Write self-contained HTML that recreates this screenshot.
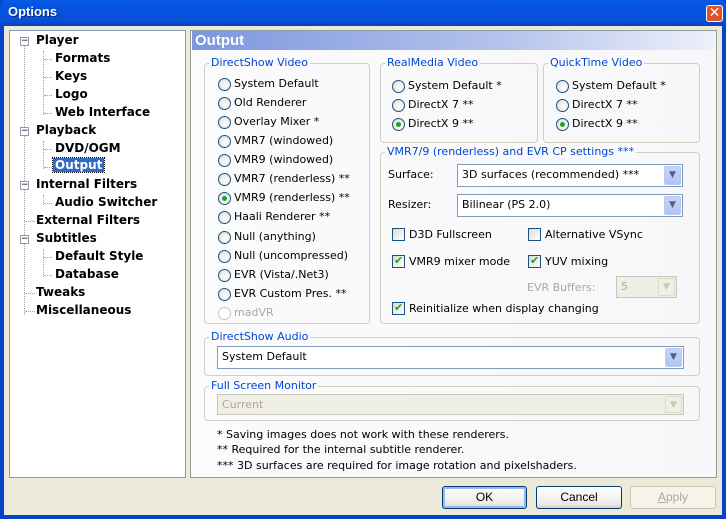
<!DOCTYPE html><html><head><style>
*{margin:0;padding:0;box-sizing:border-box}
body{width:726px;height:519px;overflow:hidden;background:#0842c8;font-family:"DejaVu Sans","Liberation Sans",sans-serif;font-size:11px;position:relative}
.a{position:absolute;white-space:nowrap}
#title{left:0;top:0;width:726px;height:26px;background:linear-gradient(#0a5ae8,#0453e0 20%,#0a4fd8 80%,#0a3fb8);border-radius:7px 7px 0 0}
#tt{left:8px;top:4px;color:#fff;font-weight:bold;font-size:13px;font-family:"Liberation Sans",sans-serif;text-shadow:1px 1px #0a2a80}
#cls{left:706px;top:5px;width:17px;height:17px;background:#e0522a;border:1px solid #fff;border-radius:3px;color:#fff;font-weight:bold;font-size:14px;text-align:center;line-height:15px}
#body{left:4px;top:26px;width:718px;height:489px;background:#ece9d8}
#tree{left:9px;top:30px;width:177px;height:448px;background:#fff;border:1px solid #7f9db9}
.t{position:absolute;font-weight:bold;font-size:12px;color:#000}
.ex{position:absolute;width:9px;height:9px;border:1px solid #8a99b5;background:#fff;font-size:9px;line-height:6px;text-align:center;color:#000}
.dv{position:absolute;border-left:1px dotted #a0a0a0}
.dh{position:absolute;border-top:1px dotted #a0a0a0;width:8px}
#panel{left:190px;top:30px;width:527px;height:448px;border:1px solid #919b9c;background:linear-gradient(90deg,#fbfbfc,#f7f7fa)}
#hdr{left:192px;top:31px;width:523px;height:19px;background:linear-gradient(90deg,#7d97de,#b5c4ec 60%,#eef0fa);color:#fff;font-weight:bold;font-size:15px;padding-left:3px;line-height:19px;font-family:"Liberation Sans",sans-serif}
.g{position:absolute;border:1px solid #d0d0bf;border-radius:4px}
.gl{position:absolute;color:#0046d5;background:#fafafb;padding:0 2px;white-space:nowrap}
.r{position:absolute;white-space:nowrap;padding-left:16px;line-height:14px}
.r:before{content:"";position:absolute;left:0;top:1px;width:11px;height:11px;border:1px solid #1c5180;border-radius:50%;background:radial-gradient(circle at 60% 60%,#fff,#dcdad0)}
.r.on:after{content:"";position:absolute;left:4px;top:5px;width:5px;height:5px;border-radius:50%;background:#21a121}
.r.dis{color:#aca899}.r.dis:before{border-color:#c9c7ba;background:#fff}
.c{position:absolute;white-space:nowrap;padding-left:17px;line-height:14px}
.c:before{content:"";position:absolute;left:0;top:0;width:11px;height:11px;border:1px solid #1c5180;background:linear-gradient(135deg,#dcdad0,#fff)}
.c.on:after{content:"✔";position:absolute;left:2px;top:-1px;color:#21a121;font-size:11px}
.cb{position:absolute;background:#fff;border:1px solid #7f9db9;padding-left:4px;line-height:20px}
.cb .ar{position:absolute;right:1px;top:1px;width:17px;bottom:1px;background:linear-gradient(#c6d3f7,#b0c4f4);border:1px solid #b9c9f2;border-radius:2px;color:#4d6185;font-size:9px;text-align:center;line-height:17px}
.cb.dis{background:#f0efe6;border-color:#c9c7ba;color:#aca899}
.cb.dis .ar{background:#f0efe6;border-color:#ddd9cb;color:#c9c7ba}
.btn{position:absolute;height:23px;border:1px solid #003c74;border-radius:3px;background:linear-gradient(#fff,#ecebe6 80%,#d6d0c5);text-align:center;line-height:21px;font-family:"Liberation Sans",sans-serif;font-size:12px}
</style></head><body>
<div class="a" id="title"></div><div class="a" id="tt">Options</div><div class="a" id="cls">✕</div>
<div class="a" id="body"></div>
<div class="a" id="tree">
<div class="dv" style="left:14px;top:14px;height:270px"></div>
<div class="dv" style="left:33px;top:20px;height:64px"></div>
<div class="dv" style="left:33px;top:110px;height:28px"></div>
<div class="dv" style="left:33px;top:164px;height:10px"></div>
<div class="dv" style="left:33px;top:218px;height:28px"></div>
<div class="dh" style="left:34px;top:28px"></div><div class="dh" style="left:34px;top:46px"></div><div class="dh" style="left:34px;top:64px"></div><div class="dh" style="left:34px;top:82px"></div>
<div class="dh" style="left:34px;top:118px"></div><div class="dh" style="left:34px;top:136px"></div><div class="dh" style="left:34px;top:172px"></div>
<div class="dh" style="left:34px;top:226px"></div><div class="dh" style="left:34px;top:244px"></div>
<div class="dh" style="left:15px;top:190px;width:10px"></div><div class="dh" style="left:15px;top:262px;width:10px"></div><div class="dh" style="left:15px;top:280px;width:10px"></div>
<div class="ex" style="left:10px;top:6px">−</div><div class="ex" style="left:10px;top:96px">−</div><div class="ex" style="left:10px;top:150px">−</div><div class="ex" style="left:10px;top:204px">−</div>
<div class="t" style="left:26px;top:2px">Player</div>
<div class="t" style="left:45px;top:20px">Formats</div>
<div class="t" style="left:45px;top:38px">Keys</div>
<div class="t" style="left:45px;top:56px">Logo</div>
<div class="t" style="left:45px;top:74px">Web Interface</div>
<div class="t" style="left:26px;top:92px">Playback</div>
<div class="t" style="left:45px;top:110px">DVD/OGM</div>
<div class="t" style="left:43px;top:127px;background:#316ac5;color:#fff;padding:0 2px;outline:1px dotted #000">Output</div>
<div class="t" style="left:26px;top:146px">Internal Filters</div>
<div class="t" style="left:45px;top:164px">Audio Switcher</div>
<div class="t" style="left:26px;top:182px">External Filters</div>
<div class="t" style="left:26px;top:200px">Subtitles</div>
<div class="t" style="left:45px;top:218px">Default Style</div>
<div class="t" style="left:45px;top:236px">Database</div>
<div class="t" style="left:26px;top:254px">Tweaks</div>
<div class="t" style="left:26px;top:272px">Miscellaneous</div>
</div>
<div class="a" id="panel"></div>
<div class="a" id="hdr">Output</div>

<div class="g" style="left:204px;top:63px;width:166px;height:261px"></div><div class="gl" style="left:209px;top:56px">DirectShow Video</div>
<div class="r" style="left:218px;top:77px">System Default</div>
<div class="r" style="left:218px;top:96px">Old Renderer</div>
<div class="r" style="left:218px;top:115px">Overlay Mixer *</div>
<div class="r" style="left:218px;top:134px">VMR7 (windowed)</div>
<div class="r" style="left:218px;top:153px">VMR9 (windowed)</div>
<div class="r" style="left:218px;top:172px">VMR7 (renderless) **</div>
<div class="r on" style="left:218px;top:191px">VMR9 (renderless) **</div>
<div class="r" style="left:218px;top:210px">Haali Renderer **</div>
<div class="r" style="left:218px;top:230px">Null (anything)</div>
<div class="r" style="left:218px;top:249px">Null (uncompressed)</div>
<div class="r" style="left:218px;top:268px">EVR (Vista/.Net3)</div>
<div class="r" style="left:218px;top:287px">EVR Custom Pres. **</div>
<div class="r dis" style="left:218px;top:306px">madVR</div>

<div class="g" style="left:380px;top:63px;width:158px;height:80px"></div><div class="gl" style="left:385px;top:56px">RealMedia Video</div>
<div class="r" style="left:392px;top:79px">System Default *</div>
<div class="r" style="left:392px;top:98px">DirectX 7 **</div>
<div class="r on" style="left:392px;top:117px">DirectX 9 **</div>
<div class="g" style="left:543px;top:63px;width:157px;height:80px"></div><div class="gl" style="left:548px;top:56px">QuickTime Video</div>
<div class="r" style="left:556px;top:79px">System Default *</div>
<div class="r" style="left:556px;top:98px">DirectX 7 **</div>
<div class="r on" style="left:556px;top:117px">DirectX 9 **</div>

<div class="g" style="left:380px;top:152px;width:320px;height:172px"></div><div class="gl" style="left:385px;top:145px">VMR7/9 (renderless) and EVR CP settings ***</div>
<div class="a" style="left:388px;top:168px">Surface:</div>
<div class="cb" style="left:457px;top:164px;width:226px;height:23px">3D surfaces (recommended) ***<div class="ar">▼</div></div>
<div class="a" style="left:388px;top:198px">Resizer:</div>
<div class="cb" style="left:457px;top:194px;width:226px;height:23px">Bilinear (PS 2.0)<div class="ar">▼</div></div>
<div class="c" style="left:392px;top:228px">D3D Fullscreen</div>
<div class="c" style="left:528px;top:228px">Alternative VSync</div>
<div class="c on" style="left:392px;top:255px">VMR9 mixer mode</div>
<div class="c on" style="left:528px;top:255px">YUV mixing</div>
<div class="a" style="left:527px;top:281px;color:#aca899">EVR Buffers:</div>
<div class="cb dis" style="left:616px;top:276px;width:61px;height:22px;line-height:19px">5<div class="ar">▼</div></div>
<div class="c on" style="left:392px;top:302px">Reinitialize when display changing</div>

<div class="g" style="left:204px;top:337px;width:496px;height:39px"></div><div class="gl" style="left:209px;top:330px">DirectShow Audio</div>
<div class="cb" style="left:217px;top:346px;width:467px;height:23px">System Default<div class="ar">▼</div></div>
<div class="g" style="left:204px;top:386px;width:496px;height:35px"></div><div class="gl" style="left:209px;top:379px">Full Screen Monitor</div>
<div class="cb dis" style="left:217px;top:394px;width:467px;height:21px;line-height:19px">Current<div class="ar">▼</div></div>
<div class="a" style="left:217px;top:428px">* Saving images does not work with these renderers.</div>
<div class="a" style="left:217px;top:443px">** Required for the internal subtitle renderer.</div>
<div class="a" style="left:217px;top:459px">*** 3D surfaces are required for image rotation and pixelshaders.</div>

<div class="btn" style="left:442px;top:486px;width:85px;box-shadow:inset 0 0 0 2px #9db6ec">OK</div>
<div class="btn" style="left:536px;top:486px;width:86px">Cancel</div>
<div class="btn" style="left:630px;top:486px;width:86px;border-color:#c9c7ba;background:#f5f4ea;color:#aca899"><u>A</u>pply</div>
</body></html>
